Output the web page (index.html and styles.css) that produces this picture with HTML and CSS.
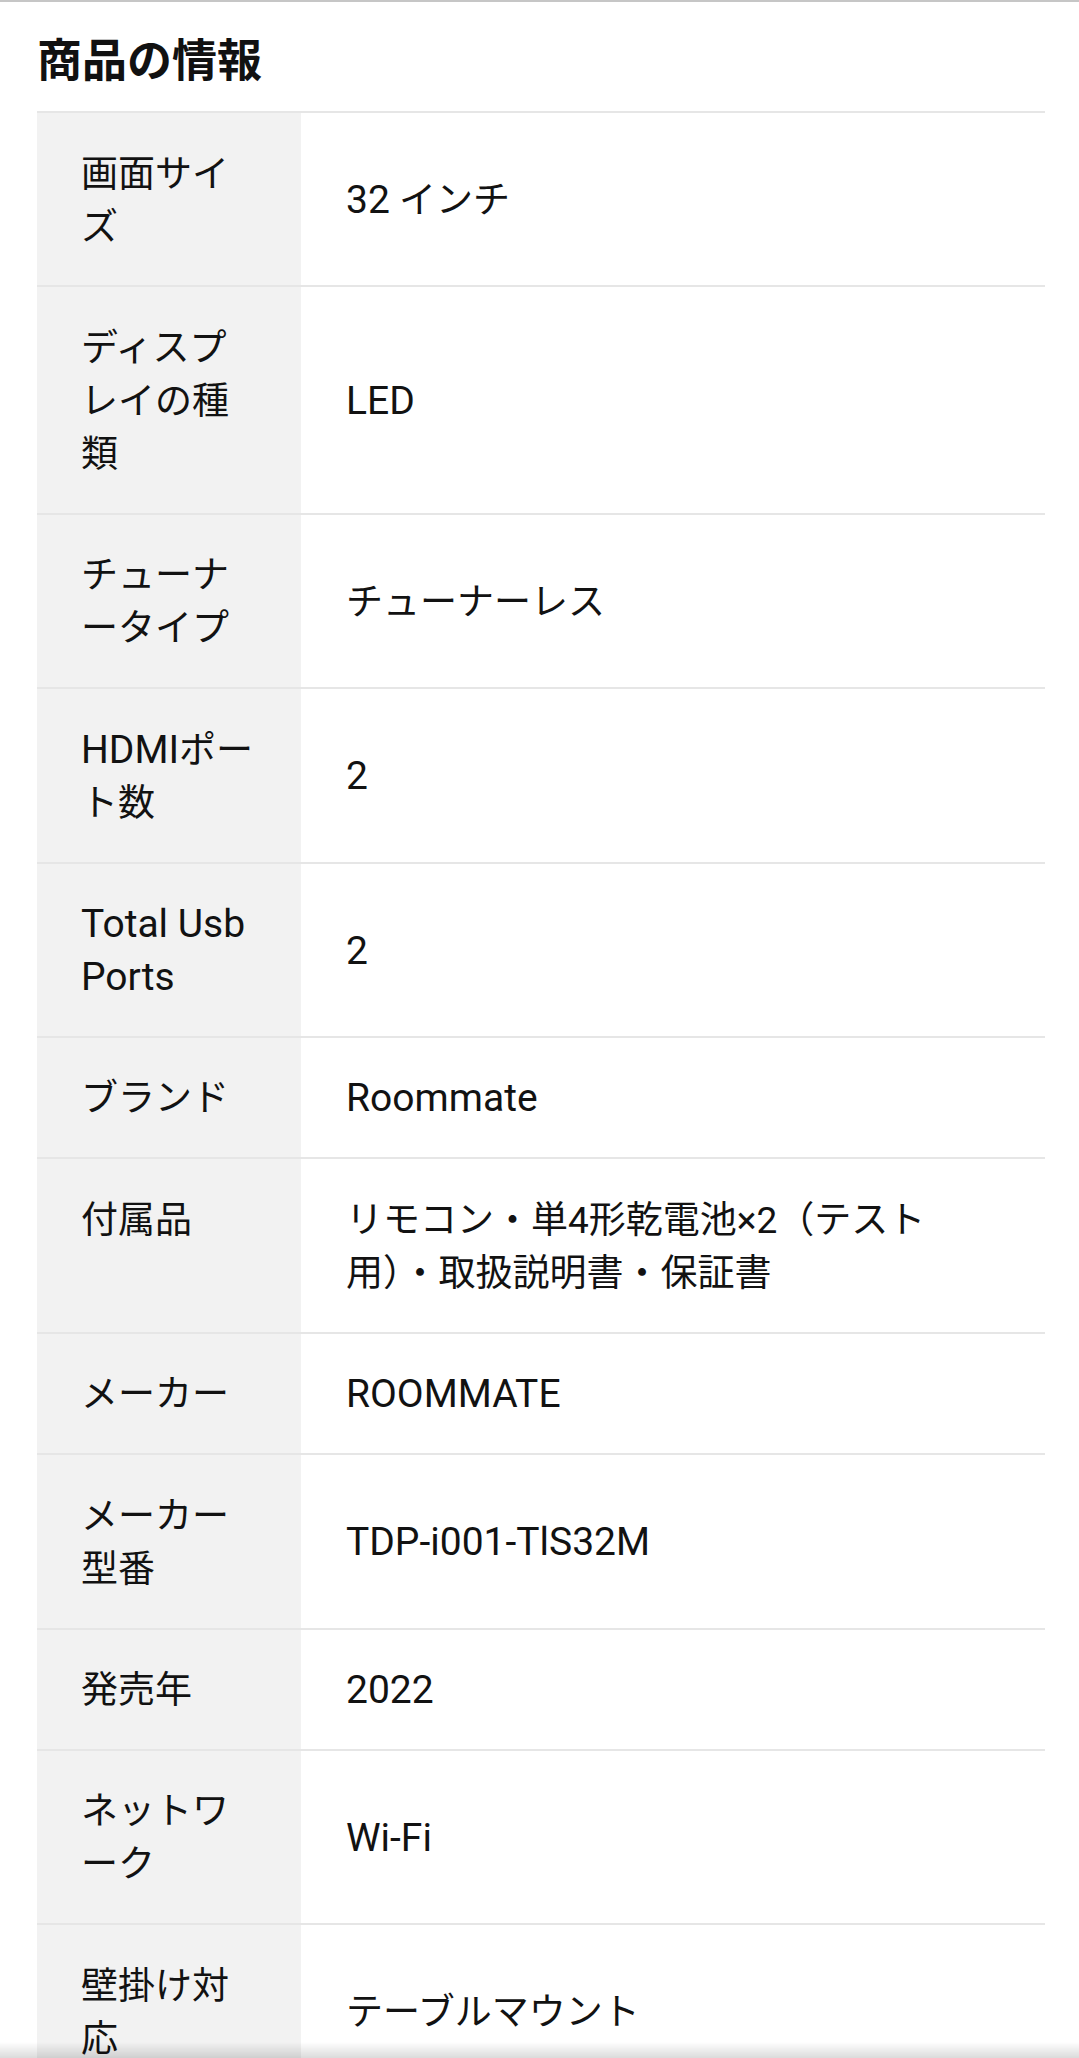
FILE: index.html
```html
<!DOCTYPE html>
<html lang="ja">
<head>
<meta charset="utf-8">
<title>商品の情報</title>
<link rel="stylesheet" href="styles.css">
</head>
<body>
<div class="topline"></div>
<section class="info">
  <h2 class="info-title">商品の情報</h2>
  <table class="spec">
    <tbody>
      <tr><th>画面サイズ</th><td><span class="en">32</span> インチ</td></tr>
      <tr><th>ディスプレイの種類</th><td class="en">LED</td></tr>
      <tr><th>チューナータイプ</th><td>チューナーレス</td></tr>
      <tr><th><span class="en">HDMI</span>ポート数</th><td class="en">2</td></tr>
      <tr><th class="en">Total Usb Ports</th><td class="en">2</td></tr>
      <tr><th>ブランド</th><td class="en">Roommate</td></tr>
      <tr><th>付属品</th><td>リモコン・単4形乾電池×2（テスト用）・取扱説明書・保証書</td></tr>
      <tr><th>メーカー</th><td class="en">ROOMMATE</td></tr>
      <tr><th>メーカー型番</th><td class="en">TDP-i001-TlS32M</td></tr>
      <tr><th>発売年</th><td class="en">2022</td></tr>
      <tr><th>ネットワーク</th><td class="en">Wi-Fi</td></tr>
      <tr><th>壁掛け対応</th><td>テーブルマウント</td></tr>
      <tr><th>電源</th><td class="en">AC100V</td></tr>
    </tbody>
  </table>
</section>
<div class="bottom-shade"></div>
</body>
</html>
```

FILE: styles.css
```css
html, body {
  margin: 0;
  padding: 0;
  background: #ffffff;
}

body {
  font-family: Roboto, "Noto Sans CJK JP", sans-serif;
  color: #121212;
}

.topline {
  border-top: 2px solid #c6c6c6;
}

.info {
  padding: 0 34px 0 37px;
}

.info-title {
  margin: 0;
  padding-top: 21px;
  padding-bottom: 18px;
  font-size: 45px;
  line-height: 70px;
  font-weight: 700;
  font-family: "Noto Sans CJK JP", sans-serif;
  color: #111111;
}

.spec {
  width: 100%;
  border-collapse: collapse;
  border-top: 2px solid #e6e6e6;
  font-size: 37px;
  line-height: 53px;
}

.spec th,
.spec td {
  border-bottom: 2px solid #e6e6e6;
  padding-top: 34.5px;
  padding-bottom: 31.9px;
  text-align: left;
  font-weight: 400;
}

.spec th {
  box-sizing: border-box;
  width: 264px;
  padding-left: 44px;
  padding-right: 40px;
  background: #f2f2f2;
  vertical-align: top;
  line-break: loose;
  word-break: normal;
}

.spec td {
  padding-left: 45px;
  padding-right: 80px;
  vertical-align: middle;
  line-break: strict;
}

.spec .en {
  font-family: Roboto, sans-serif;
}

.spec span.en,
.spec td.en,
.spec th.en {
  font-size: 39px;
}

.bottom-shade {
  position: fixed;
  left: 0;
  right: 0;
  bottom: 0;
  height: 16px;
  background: linear-gradient(to bottom, rgba(0, 0, 0, 0), rgba(0, 0, 0, 0.14));
  pointer-events: none;
}
```
